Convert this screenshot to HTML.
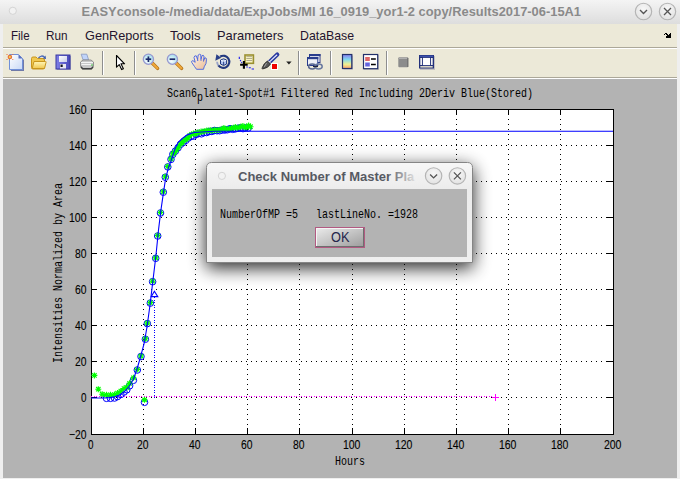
<!DOCTYPE html>
<html><head><meta charset="utf-8"><style>
html,body{margin:0;padding:0;width:680px;height:479px;overflow:hidden;background:#efefef}
svg{position:absolute;left:0;top:0;display:block}
text{white-space:pre}
.mono{font-family:"Liberation Mono",monospace;font-size:13.5px;fill:#000;stroke:none}
.sans{font-family:"Liberation Sans",sans-serif}
.num{font-family:"Liberation Sans",sans-serif;font-size:12.6px;fill:#000;stroke:#000;stroke-width:0.1px}
</style></head><body>
<svg width="680" height="479" viewBox="0 0 680 479" shape-rendering="crispEdges">
<defs>
<linearGradient id="tb" x1="0" y1="0" x2="0" y2="1"><stop offset="0" stop-color="#f4f4f4"/><stop offset="1" stop-color="#dddddd"/></linearGradient>
<linearGradient id="dfr" gradientUnits="userSpaceOnUse" x1="0" y1="163" x2="0" y2="262"><stop offset="0" stop-color="#f7f7f7"/><stop offset="0.26" stop-color="#ececec"/><stop offset="1" stop-color="#efefef"/></linearGradient>
<radialGradient id="btn" cx="0.5" cy="0.35" r="0.6"><stop offset="0" stop-color="#f7f7f7"/><stop offset="1" stop-color="#e4e4e4"/></radialGradient>
<linearGradient id="okg" x1="0" y1="0" x2="1" y2="1"><stop offset="0" stop-color="#ebebeb"/><stop offset="0.5" stop-color="#c4c4c4"/><stop offset="1" stop-color="#9c9c9c"/></linearGradient>
<filter id="shadow" x="-30%" y="-60%" width="160%" height="220%"><feGaussianBlur in="SourceAlpha" stdDeviation="9"/><feOffset dx="0" dy="5"/><feComponentTransfer><feFuncA type="linear" slope="0.85"/></feComponentTransfer><feMerge><feMergeNode/><feMergeNode in="SourceGraphic"/></feMerge></filter>
</defs>

<rect x="0" y="0" width="680" height="24" fill="url(#tb)"/>
<circle cx="12.8" cy="10.8" r="3.6" fill="#f2f2f2" stroke="#d4d4d4" stroke-width="1" shape-rendering="auto"/>
<text x="81.6" y="16" class="sans" font-weight="bold" font-size="13" fill="#8a8a8a" textLength="499.4" lengthAdjust="spacingAndGlyphs" shape-rendering="auto">EASYconsole-/media/data/ExpJobs/MI 16_0919_yor1-2 copy/Results2017-06-15A1</text>
<circle cx="643.5" cy="11.5" r="8.2" fill="url(#btn)" stroke="#b4b4b4" stroke-width="1.15" shape-rendering="auto"/>
<path d="M640.0 10 L643.5 13.5 L647.0 10" fill="none" stroke="#555" stroke-width="1.35" shape-rendering="auto"/>
<circle cx="667.5" cy="11.5" r="8.2" fill="url(#btn)" stroke="#b4b4b4" stroke-width="1.15" shape-rendering="auto"/>
<path d="M664.0 8 L671.0 15 M671.0 8 L664.0 15" fill="none" stroke="#555" stroke-width="1.3" shape-rendering="auto"/>
<rect x="3" y="24" width="674" height="55" fill="#ece9d8"/>
<text x="11" y="40" class="sans" font-size="13" fill="#24142e" textLength="18.6" lengthAdjust="spacingAndGlyphs" shape-rendering="auto">File</text>
<text x="46" y="40" class="sans" font-size="13" fill="#24142e" textLength="21.5" lengthAdjust="spacingAndGlyphs" shape-rendering="auto">Run</text>
<text x="85" y="40" class="sans" font-size="13" fill="#24142e" textLength="68.5" lengthAdjust="spacingAndGlyphs" shape-rendering="auto">GenReports</text>
<text x="170" y="40" class="sans" font-size="13" fill="#24142e" textLength="30.5" lengthAdjust="spacingAndGlyphs" shape-rendering="auto">Tools</text>
<text x="217" y="40" class="sans" font-size="13" fill="#24142e" textLength="66.5" lengthAdjust="spacingAndGlyphs" shape-rendering="auto">Parameters</text>
<text x="300" y="40" class="sans" font-size="13" fill="#24142e" textLength="54" lengthAdjust="spacingAndGlyphs" shape-rendering="auto">DataBase</text>
<rect x="3" y="47" width="674" height="1" fill="#aca899"/><rect x="3" y="48" width="674" height="1" fill="#ffffff"/>
<rect x="3" y="77" width="674" height="1" fill="#aca899"/><rect x="3" y="78" width="674" height="1" fill="#ffffff"/>
<rect x="102" y="51" width="1" height="24" fill="#8e8e8e"/><rect x="103" y="51" width="1" height="24" fill="#ffffff"/>
<rect x="134" y="51" width="1" height="24" fill="#8e8e8e"/><rect x="135" y="51" width="1" height="24" fill="#ffffff"/>
<rect x="298" y="51" width="1" height="24" fill="#8e8e8e"/><rect x="299" y="51" width="1" height="24" fill="#ffffff"/>
<rect x="330" y="51" width="1" height="24" fill="#8e8e8e"/><rect x="331" y="51" width="1" height="24" fill="#ffffff"/>
<rect x="386" y="51" width="1" height="24" fill="#8e8e8e"/><rect x="387" y="51" width="1" height="24" fill="#ffffff"/>
<defs>
<linearGradient id="pageg" x1="0" y1="0" x2="1" y2="1"><stop offset="0" stop-color="#ffffff"/><stop offset="1" stop-color="#c9d9f6"/></linearGradient>
<linearGradient id="foldg" x1="0" y1="0" x2="0" y2="1"><stop offset="0" stop-color="#fff6b8"/><stop offset="1" stop-color="#f0c850"/></linearGradient>
<linearGradient id="floppyg" x1="0" y1="0" x2="1" y2="0"><stop offset="0" stop-color="#8080e8"/><stop offset="1" stop-color="#4848b8"/></linearGradient>
<linearGradient id="labelg" x1="0" y1="0" x2="1" y2="1"><stop offset="0" stop-color="#ffffff"/><stop offset="1" stop-color="#c8cce8"/></linearGradient>
<linearGradient id="printg" x1="0" y1="0" x2="0" y2="1"><stop offset="0" stop-color="#f0f0f0"/><stop offset="0.5" stop-color="#c0c0c0"/><stop offset="1" stop-color="#606060"/></linearGradient>
<radialGradient id="lensg" cx="0.4" cy="0.65" r="0.6"><stop offset="0" stop-color="#ffffff"/><stop offset="1" stop-color="#a8e0ee"/></radialGradient>
<linearGradient id="sking" x1="0" y1="0" x2="1" y2="1"><stop offset="0" stop-color="#fff6ee"/><stop offset="1" stop-color="#ebbc94"/></linearGradient>
<linearGradient id="cbarg" x1="0" y1="0" x2="0" y2="1"><stop offset="0" stop-color="#8a7cf0"/><stop offset="0.35" stop-color="#80d8f0"/><stop offset="0.7" stop-color="#f0f090"/><stop offset="1" stop-color="#f8a070"/></linearGradient>
</defs>
<g shape-rendering="auto">
<path d="M11 56 H20 L24 60 V71 H11 Z" fill="#5a66a0" opacity="0.85"/>
<path d="M9.5 54.5 H18.5 L22.5 58.5 V69.5 H9.5 Z" fill="url(#pageg)" stroke="#7090d8" stroke-width="1"/>
<path d="M18.5 54.5 V58.5 H22.5 Z" fill="#5a70c0"/>
<circle cx="9.9" cy="57" r="2.3" fill="#e8703a"/><circle cx="9.9" cy="57" r="1" fill="#f4e050"/>
<path d="M6.5 54 L7.5 55 M13.3 54 L12.3 55 M6.5 60 L7.5 59 M13.3 60 L12.3 59" stroke="#e8703a" stroke-width="1"/>
<path d="M31.5 58.5 Q31.5 57 33 57 H36 L37.5 58.5 H43 Q44.5 58.5 44.5 60 V67.5 Q44.5 69 43 69 H33 Q31.5 69 31.5 67.5 Z" fill="#f0c850" stroke="#c8961e" stroke-width="1"/>
<path d="M34 61.5 H45.5 Q46.5 61.5 46 62.5 L44.5 68.5 H32.2 Z" fill="url(#foldg)" stroke="#c8961e" stroke-width="1"/>
<path d="M38.5 58 Q41.5 54.5 44.5 57.2" fill="none" stroke="#4a6ab8" stroke-width="1.3"/><path d="M43 58.5 L46 59 L45.5 55.5 Z" fill="#3a5aa8"/>
<rect x="57" y="56" width="14" height="14" fill="#9090b0" opacity="0.7"/>
<rect x="56" y="55" width="14" height="14" fill="url(#floppyg)" stroke="#3838a0" stroke-width="1"/>
<rect x="59" y="56" width="8" height="6" fill="url(#labelg)"/>
<rect x="60" y="64" width="6" height="4.5" fill="#e8e8f0"/><rect x="60.5" y="64.5" width="2.2" height="2.5" fill="#101020"/>
<path d="M81.2 54.2 H86.8 L88.6 59.8 H83 Z" fill="#c0d4fa" stroke="#8898c0" stroke-width="0.8"/>
<path d="M80.5 62 L83 60 H91 L93.5 62 V66.5 L91.5 69 H82.5 L80.5 66.5 Z" fill="#c8c8c8" stroke="#808080" stroke-width="0.8"/>
<path d="M81 62.5 H93 M81.5 64.5 H92.5" stroke="#f4f4f4" stroke-width="1"/>
<path d="M81 66.8 L82.6 68.8 H91.4 L93 66.8" fill="none" stroke="#404040" stroke-width="1.4"/>
<path d="M92 64 V66" stroke="#40c040" stroke-width="1"/>
<path d="M116.5 55.5 V67.2 L119.2 64.6 L121.6 69.6 L123.4 68.8 L121 63.8 H124.6 Z" fill="#ffffff" stroke="#000" stroke-width="1.1" stroke-linejoin="round"/>
<path d="M152.4 63.2 L157.6 68.4" stroke="#b07018" stroke-width="3.4" stroke-linecap="round"/>
<path d="M152.4 63.2 L157.4 68.2" stroke="#f0a838" stroke-width="2.2" stroke-linecap="round"/>
<circle cx="148.4" cy="59.2" r="5.1" fill="url(#lensg)" stroke="#9898d0" stroke-width="1.3"/>
<path d="M145.6 59.2 H151.20000000000002" stroke="#1a2a6a" stroke-width="1.7"/>
<path d="M148.4 56.400000000000006 V62.0" stroke="#1a2a6a" stroke-width="1.7"/>
<path d="M176.4 63.2 L181.6 68.4" stroke="#b07018" stroke-width="3.4" stroke-linecap="round"/>
<path d="M176.4 63.2 L181.4 68.2" stroke="#f0a838" stroke-width="2.2" stroke-linecap="round"/>
<circle cx="172.4" cy="59.2" r="5.1" fill="url(#lensg)" stroke="#9898d0" stroke-width="1.3"/>
<path d="M169.6 59.2 H175.20000000000002" stroke="#1a2a6a" stroke-width="1.7"/>
<path d="M196.5 69.3 L194.5 66.5 L191.8 62.5 Q191 61 192.8 60.6 L195.2 62.3 L194 57.5 Q194.5 55.3 196.2 55.8 L197.6 59.5 L198.2 55 Q199.5 53.7 200.7 54.6 L201 59.3 L202 55.6 Q203.3 54.8 204 56 L203.8 60 L204.8 57.8 Q206.3 57.5 206.5 59.2 L206 63.5 L204.2 66.8 L203.5 69.3 Z" fill="url(#sking)" stroke="#3a5ae0" stroke-width="0.85"/>
<path d="M197.6 59.5 L197.8 61 M201 59.3 V60.8 M203.8 60 L203.5 61.5" stroke="#3050d8" stroke-width="0.9"/>
<path d="M220.2 56.5 A6.1 6.1 0 1 1 218.3 65.4" fill="none" stroke="#22387e" stroke-width="2.1"/>
<path d="M218.3 65.4 A6.1 6.1 0 0 1 217.1 61.8" fill="none" stroke="#9aa4c8" stroke-width="1.8"/>
<path d="M216.4 54.2 L221.3 57.8 L215.3 60.8 Z" fill="#2a4088"/>
<path d="M220.5 60 L223.6 58.8 L226.6 60 V64 L223.6 65.5 L220.5 64 Z" fill="#b0c4f0" stroke="#22387e" stroke-width="1"/><path d="M221 60.4 L223.6 61.4 L226.2 60.4" stroke="#ffffff" stroke-width="0.9" fill="none"/><path d="M223.6 61.6 V65" stroke="#22387e" stroke-width="0.9"/>
<rect x="245" y="55" width="8.4" height="8.3" fill="#f8f4c4" stroke="#9a9030" stroke-width="1.6"/>
<path d="M246.3 56.6 H252.2 M246.3 58.5 H252.2 M246.3 60.5 H252.2" stroke="#a8a488" stroke-width="0.9"/>
<path d="M239.3 56.8 V59 M240.2 60 L240.8 61.2 M241.4 62.2 L242 63" stroke="#1818f0" stroke-width="1.1" fill="none"/>
<path d="M246.3 67 H247.8 M248.8 67.8 H250.8 M251.6 69 H254" stroke="#1818f0" stroke-width="1.1" fill="none"/>
<path d="M240.1 64.8 H247.7 M243.9 61.1 V68.7" stroke="#000" stroke-width="2.1"/>
<path d="M269 62.6 L277.3 54.6" stroke="#2a3aa0" stroke-width="4.2" stroke-linecap="round"/><path d="M269.5 61.8 L276.8 55" stroke="#e8ecff" stroke-width="1.1" stroke-linecap="round"/>
<path d="M268 60.8 L270.8 63.6" stroke="#ffffff" stroke-width="1.2"/>
<path d="M267.5 61 L270.5 64 Q268.5 68 262.5 69 Q261.8 68.6 262.3 67.6 Q264 63 267.5 61 Z" fill="#585858" stroke="#282828" stroke-width="0.9"/><path d="M266.5 63.2 L264.3 66.8" stroke="#b0b0b0" stroke-width="0.9"/>
<rect x="271" y="63" width="7" height="7" fill="#ffffff"/><rect x="272" y="64" width="5" height="5" fill="#ee0000"/>
<path d="M286.2 61.5 H291.6 L288.9 64.4 Z" fill="#202020"/>
<rect x="309.5" y="54.5" width="10.5" height="8" fill="#ffffff" stroke="#283c8c" stroke-width="1"/><rect x="309" y="54" width="11.5" height="2.2" fill="#283c8c"/><rect x="320" y="56" width="1" height="7" fill="#9090a8" opacity="0.6"/>
<rect x="307.5" y="57.5" width="10.3" height="8" fill="#eef0f6" stroke="#283c8c" stroke-width="1"/><rect x="307" y="57" width="11.3" height="2.2" fill="#283c8c"/>
<ellipse cx="312.2" cy="66.5" rx="3.6" ry="2.4" fill="none" stroke="#5a6890" stroke-width="1.5"/><ellipse cx="318.6" cy="66.5" rx="3.6" ry="2.4" fill="none" stroke="#6a7aa0" stroke-width="1.5"/><path d="M313 66.5 H318" stroke="#20243a" stroke-width="1.2"/>
<rect x="343.5" y="55.5" width="9.5" height="14" fill="#9090a8" opacity="0.6"/>
<rect x="342.5" y="54.5" width="9.3" height="14" fill="url(#cbarg)" stroke="#22306a" stroke-width="1.2"/>
<rect x="364" y="55" width="15" height="15" fill="#a0a0b0" opacity="0.5"/>
<rect x="363.5" y="54.5" width="14.2" height="14.2" fill="#ffffff" stroke="#22306a" stroke-width="1.2"/>
<rect x="365.2" y="57" width="4.6" height="4" fill="#e06868"/><rect x="365.2" y="62.5" width="4.6" height="4" fill="#6464e0"/>
<path d="M371 59 H375.8 M371 64.5 H375.8" stroke="#000" stroke-width="1.4"/>
<rect x="398.3" y="57.3" width="10" height="10" rx="1" fill="#8c8c8c"/><path d="M399 58.3 H407.5" stroke="#b8b8b8" stroke-width="1"/><path d="M407.8 58 V67" stroke="#6c6c6c" stroke-width="1"/>
<rect x="420" y="56" width="15" height="14" fill="#9898a8" opacity="0.5"/>
<rect x="419" y="55" width="15" height="13.5" fill="#22307a"/><rect x="419.8" y="55.7" width="13.4" height="1" fill="#4a60c0"/>
<rect x="420.3" y="58" width="1.7" height="7" fill="#f0f0f0"/><rect x="431" y="58" width="1.7" height="7" fill="#f0f0f0"/><rect x="420.3" y="66" width="12.4" height="1.6" fill="#d8d4c4"/>
<rect x="422.9" y="57.9" width="7.2" height="7.2" fill="#ffffff"/>
<path d="M664 34h1v1h-1z M665 33h2v1h-2z M670 33h1v1h-1z M666 34h2v1h-2z M669 34h2v1h-2z M667 35h4v1h-4z M666 36h5v2h-5z" fill="#000" shape-rendering="crispEdges"/>
</g>
<rect x="3" y="79" width="674" height="399" fill="#b3b3b3"/>
<rect x="91" y="109" width="523" height="326" fill="#ffffff"/>
<path d="M143.5 109 V434 M195.5 109 V434 M247.5 109 V434 M299.5 109 V434 M352.5 109 V434 M404.5 109 V434 M456.5 109 V434 M508.5 109 V434 M560.5 109 V434 M91 397.5 H613 M91 361.5 H613 M91 325.5 H613 M91 289.5 H613 M91 253.5 H613 M91 217.5 H613 M91 181.5 H613 M91 145.5 H613" stroke="#000" stroke-width="1" stroke-dasharray="1 4" fill="none"/>
<path d="M143.5 434 V428 M143.5 109 V115 M195.5 434 V428 M195.5 109 V115 M247.5 434 V428 M247.5 109 V115 M299.5 434 V428 M299.5 109 V115 M352.5 434 V428 M352.5 109 V115 M404.5 434 V428 M404.5 109 V115 M456.5 434 V428 M456.5 109 V115 M508.5 434 V428 M508.5 109 V115 M560.5 434 V428 M560.5 109 V115 M91 397.5 H97 M613 397.5 H607 M91 361.5 H97 M613 361.5 H607 M91 325.5 H97 M613 325.5 H607 M91 289.5 H97 M613 289.5 H607 M91 253.5 H97 M613 253.5 H607 M91 217.5 H97 M613 217.5 H607 M91 181.5 H97 M613 181.5 H607 M91 145.5 H97 M613 145.5 H607" stroke="#000" stroke-width="1" fill="none"/>
<rect x="91.5" y="109.5" width="522" height="325" fill="none" stroke="#000" stroke-width="1"/>
<text x="69.0" y="439" class="num" textLength="17.5" lengthAdjust="spacingAndGlyphs" shape-rendering="auto">−20</text>
<text x="81.0" y="402" class="num" textLength="5.5" lengthAdjust="spacingAndGlyphs" shape-rendering="auto">0</text>
<text x="75.0" y="366" class="num" textLength="11.5" lengthAdjust="spacingAndGlyphs" shape-rendering="auto">20</text>
<text x="75.0" y="330" class="num" textLength="11.5" lengthAdjust="spacingAndGlyphs" shape-rendering="auto">40</text>
<text x="75.0" y="294" class="num" textLength="11.5" lengthAdjust="spacingAndGlyphs" shape-rendering="auto">60</text>
<text x="75.0" y="258" class="num" textLength="11.5" lengthAdjust="spacingAndGlyphs" shape-rendering="auto">80</text>
<text x="69.0" y="222" class="num" textLength="17.5" lengthAdjust="spacingAndGlyphs" shape-rendering="auto">100</text>
<text x="69.0" y="186" class="num" textLength="17.5" lengthAdjust="spacingAndGlyphs" shape-rendering="auto">120</text>
<text x="69.0" y="150" class="num" textLength="17.5" lengthAdjust="spacingAndGlyphs" shape-rendering="auto">140</text>
<text x="69.0" y="114" class="num" textLength="17.5" lengthAdjust="spacingAndGlyphs" shape-rendering="auto">160</text>
<text x="87.95" y="449" class="num" textLength="5.5" lengthAdjust="spacingAndGlyphs" shape-rendering="auto">0</text>
<text x="136.95" y="449" class="num" textLength="11.5" lengthAdjust="spacingAndGlyphs" shape-rendering="auto">20</text>
<text x="188.95" y="449" class="num" textLength="11.5" lengthAdjust="spacingAndGlyphs" shape-rendering="auto">40</text>
<text x="240.95" y="449" class="num" textLength="11.5" lengthAdjust="spacingAndGlyphs" shape-rendering="auto">60</text>
<text x="292.95" y="449" class="num" textLength="11.5" lengthAdjust="spacingAndGlyphs" shape-rendering="auto">80</text>
<text x="342.95" y="449" class="num" textLength="17.5" lengthAdjust="spacingAndGlyphs" shape-rendering="auto">100</text>
<text x="394.95" y="449" class="num" textLength="17.5" lengthAdjust="spacingAndGlyphs" shape-rendering="auto">120</text>
<text x="446.95" y="449" class="num" textLength="17.5" lengthAdjust="spacingAndGlyphs" shape-rendering="auto">140</text>
<text x="498.95" y="449" class="num" textLength="17.5" lengthAdjust="spacingAndGlyphs" shape-rendering="auto">160</text>
<text x="550.95" y="449" class="num" textLength="17.5" lengthAdjust="spacingAndGlyphs" shape-rendering="auto">180</text>
<text x="603.95" y="449" class="num" textLength="17.5" lengthAdjust="spacingAndGlyphs" shape-rendering="auto">200</text>
<text x="335" y="465" class="mono" textLength="30" lengthAdjust="spacingAndGlyphs" shape-rendering="auto" >Hours</text>
<g transform="translate(62,363) rotate(-90)"><text x="0" y="0" class="mono" textLength="180" lengthAdjust="spacingAndGlyphs" shape-rendering="auto" >Intensities Normalized by Area</text></g>
<text x="167" y="97" class="mono" textLength="30" lengthAdjust="spacingAndGlyphs" shape-rendering="auto">Scan6</text>
<text x="197" y="101" class="mono" textLength="6" lengthAdjust="spacingAndGlyphs" shape-rendering="auto">p</text>
<text x="203" y="97" class="mono" textLength="330" lengthAdjust="spacingAndGlyphs" shape-rendering="auto" >late1-Spot#1 Filtered Red Including 2Deriv Blue(Stored)</text>
<path d="M91 396.5 H493" stroke="#ff00ff" stroke-width="1" stroke-dasharray="1 1.5" fill="none"/>
<path d="M492 397.5 H499 M495.5 394 V401" stroke="#ff00ff" stroke-width="1" fill="none"/>
<path d="M154.5 297 V398" stroke="#0000ff" stroke-width="1" stroke-dasharray="1 1.5" fill="none"/>
<path d="M154.4 291.2 L157.8 296.6 L151.2 296.6 Z" fill="none" stroke="#0000ff" stroke-width="1.1" shape-rendering="auto"/>
<path d="M103.2 398.3 a3.3 3.3 0 1 0 6.6 0 a3.3 3.3 0 1 0 -6.6 0 M107.2 398.3 a3.3 3.3 0 1 0 6.6 0 a3.3 3.3 0 1 0 -6.6 0 M111.2 398.0 a3.3 3.3 0 1 0 6.6 0 a3.3 3.3 0 1 0 -6.6 0 M114.2 396.6 a3.3 3.3 0 1 0 6.6 0 a3.3 3.3 0 1 0 -6.6 0 M117.5 394.5 a3.3 3.3 0 1 0 6.6 0 a3.3 3.3 0 1 0 -6.6 0 M120.7 392.0 a3.3 3.3 0 1 0 6.6 0 a3.3 3.3 0 1 0 -6.6 0 M123.5 389.8 a3.3 3.3 0 1 0 6.6 0 a3.3 3.3 0 1 0 -6.6 0 M126.3 385.8 a3.3 3.3 0 1 0 6.6 0 a3.3 3.3 0 1 0 -6.6 0 M130.1 380.3 a3.3 3.3 0 1 0 6.6 0 a3.3 3.3 0 1 0 -6.6 0 M134.0 370.0 a3.3 3.3 0 1 0 6.6 0 a3.3 3.3 0 1 0 -6.6 0 M137.7 356.5 a3.3 3.3 0 1 0 6.6 0 a3.3 3.3 0 1 0 -6.6 0 M142.1 339.2 a3.3 3.3 0 1 0 6.6 0 a3.3 3.3 0 1 0 -6.6 0 M144.0 323.6 a3.3 3.3 0 1 0 6.6 0 a3.3 3.3 0 1 0 -6.6 0 M147.0 303.1 a3.3 3.3 0 1 0 6.6 0 a3.3 3.3 0 1 0 -6.6 0 M149.3 281.7 a3.3 3.3 0 1 0 6.6 0 a3.3 3.3 0 1 0 -6.6 0 M152.4 258.3 a3.3 3.3 0 1 0 6.6 0 a3.3 3.3 0 1 0 -6.6 0 M154.4 236.0 a3.3 3.3 0 1 0 6.6 0 a3.3 3.3 0 1 0 -6.6 0 M157.2 213.0 a3.3 3.3 0 1 0 6.6 0 a3.3 3.3 0 1 0 -6.6 0 M160.0 192.2 a3.3 3.3 0 1 0 6.6 0 a3.3 3.3 0 1 0 -6.6 0 M162.0 177.2 a3.3 3.3 0 1 0 6.6 0 a3.3 3.3 0 1 0 -6.6 0 M164.5 166.9 a3.3 3.3 0 1 0 6.6 0 a3.3 3.3 0 1 0 -6.6 0 M167.7 159.4 a3.3 3.3 0 1 0 6.6 0 a3.3 3.3 0 1 0 -6.6 0 M169.5 154.4 a3.3 3.3 0 1 0 6.6 0 a3.3 3.3 0 1 0 -6.6 0 M172.1 151.1 a3.3 3.3 0 1 0 6.6 0 a3.3 3.3 0 1 0 -6.6 0 M174.7 147.8 a3.3 3.3 0 1 0 6.6 0 a3.3 3.3 0 1 0 -6.6 0 M177.3 144.3 a3.3 3.3 0 1 0 6.6 0 a3.3 3.3 0 1 0 -6.6 0 M179.9 142.5 a3.3 3.3 0 1 0 6.6 0 a3.3 3.3 0 1 0 -6.6 0 M182.5 140.3 a3.3 3.3 0 1 0 6.6 0 a3.3 3.3 0 1 0 -6.6 0 M185.1 138.0 a3.3 3.3 0 1 0 6.6 0 a3.3 3.3 0 1 0 -6.6 0 M187.7 136.4 a3.3 3.3 0 1 0 6.6 0 a3.3 3.3 0 1 0 -6.6 0 M190.3 136.1 a3.3 3.3 0 1 0 6.6 0 a3.3 3.3 0 1 0 -6.6 0 M192.9 134.4 a3.3 3.3 0 1 0 6.6 0 a3.3 3.3 0 1 0 -6.6 0 M195.5 133.5 a3.3 3.3 0 1 0 6.6 0 a3.3 3.3 0 1 0 -6.6 0 M198.1 133.8 a3.3 3.3 0 1 0 6.6 0 a3.3 3.3 0 1 0 -6.6 0 M200.7 132.6 a3.3 3.3 0 1 0 6.6 0 a3.3 3.3 0 1 0 -6.6 0 M203.3 132.5 a3.3 3.3 0 1 0 6.6 0 a3.3 3.3 0 1 0 -6.6 0 M205.9 131.5 a3.3 3.3 0 1 0 6.6 0 a3.3 3.3 0 1 0 -6.6 0 M208.5 131.4 a3.3 3.3 0 1 0 6.6 0 a3.3 3.3 0 1 0 -6.6 0 M211.1 130.5 a3.3 3.3 0 1 0 6.6 0 a3.3 3.3 0 1 0 -6.6 0 M213.7 130.7 a3.3 3.3 0 1 0 6.6 0 a3.3 3.3 0 1 0 -6.6 0 M216.3 130.7 a3.3 3.3 0 1 0 6.6 0 a3.3 3.3 0 1 0 -6.6 0 M218.9 130.0 a3.3 3.3 0 1 0 6.6 0 a3.3 3.3 0 1 0 -6.6 0 M221.5 130.0 a3.3 3.3 0 1 0 6.6 0 a3.3 3.3 0 1 0 -6.6 0 M224.1 129.7 a3.3 3.3 0 1 0 6.6 0 a3.3 3.3 0 1 0 -6.6 0 M226.7 128.7 a3.3 3.3 0 1 0 6.6 0 a3.3 3.3 0 1 0 -6.6 0 M229.3 129.3 a3.3 3.3 0 1 0 6.6 0 a3.3 3.3 0 1 0 -6.6 0 M231.9 128.9 a3.3 3.3 0 1 0 6.6 0 a3.3 3.3 0 1 0 -6.6 0 M234.5 128.3 a3.3 3.3 0 1 0 6.6 0 a3.3 3.3 0 1 0 -6.6 0 M237.1 127.8 a3.3 3.3 0 1 0 6.6 0 a3.3 3.3 0 1 0 -6.6 0 M239.7 128.6 a3.3 3.3 0 1 0 6.6 0 a3.3 3.3 0 1 0 -6.6 0 M242.3 127.9 a3.3 3.3 0 1 0 6.6 0 a3.3 3.3 0 1 0 -6.6 0 M244.9 128.0 a3.3 3.3 0 1 0 6.6 0 a3.3 3.3 0 1 0 -6.6 0 M141.2 402.3 a3.3 3.3 0 1 0 6.6 0 a3.3 3.3 0 1 0 -6.6 0" fill="none" stroke="#0000ff" stroke-width="1" shape-rendering="auto"/>
<path d="M171.5 152.3 h6 M174.5 149.3 v6 M172.3 150.1 l4.4 4.4 M176.7 150.1 l-4.4 4.4 M173.4 149.6 h6 M176.4 146.6 v6 M174.2 147.4 l4.4 4.4 M178.6 147.4 l-4.4 4.4 M175.3 147.5 h6 M178.3 144.5 v6 M176.1 145.3 l4.4 4.4 M180.5 145.3 l-4.4 4.4 M177.2 144.1 h6 M180.2 141.1 v6 M178.0 141.9 l4.4 4.4 M182.4 141.9 l-4.4 4.4 M179.1 142.9 h6 M182.1 139.9 v6 M179.9 140.7 l4.4 4.4 M184.3 140.7 l-4.4 4.4 M181.0 140.4 h6 M184.0 137.4 v6 M181.8 138.2 l4.4 4.4 M186.2 138.2 l-4.4 4.4 M182.9 139.4 h6 M185.9 136.4 v6 M183.7 137.2 l4.4 4.4 M188.1 137.2 l-4.4 4.4 M184.8 138.1 h6 M187.8 135.1 v6 M185.6 135.9 l4.4 4.4 M190.0 135.9 l-4.4 4.4 M186.7 135.5 h6 M189.7 132.5 v6 M187.5 133.3 l4.4 4.4 M191.9 133.3 l-4.4 4.4 M188.6 134.4 h6 M191.6 131.4 v6 M189.4 132.2 l4.4 4.4 M193.8 132.2 l-4.4 4.4 M190.5 133.5 h6 M193.5 130.5 v6 M191.3 131.3 l4.4 4.4 M195.7 131.3 l-4.4 4.4 M192.4 134.0 h6 M195.4 131.0 v6 M193.2 131.8 l4.4 4.4 M197.6 131.8 l-4.4 4.4 M194.3 132.6 h6 M197.3 129.6 v6 M195.1 130.4 l4.4 4.4 M199.5 130.4 l-4.4 4.4 M196.2 132.6 h6 M199.2 129.6 v6 M197.0 130.4 l4.4 4.4 M201.4 130.4 l-4.4 4.4 M198.1 131.6 h6 M201.1 128.6 v6 M198.9 129.4 l4.4 4.4 M203.3 129.4 l-4.4 4.4 M200.0 131.6 h6 M203.0 128.6 v6 M200.8 129.4 l4.4 4.4 M205.2 129.4 l-4.4 4.4 M201.9 131.0 h6 M204.9 128.0 v6 M202.7 128.8 l4.4 4.4 M207.1 128.8 l-4.4 4.4 M203.8 130.6 h6 M206.8 127.6 v6 M204.6 128.4 l4.4 4.4 M209.0 128.4 l-4.4 4.4 M205.7 130.6 h6 M208.7 127.6 v6 M206.5 128.4 l4.4 4.4 M210.9 128.4 l-4.4 4.4 M207.6 130.3 h6 M210.6 127.3 v6 M208.4 128.1 l4.4 4.4 M212.8 128.1 l-4.4 4.4 M209.5 130.6 h6 M212.5 127.6 v6 M210.3 128.4 l4.4 4.4 M214.7 128.4 l-4.4 4.4 M211.4 130.0 h6 M214.4 127.0 v6 M212.2 127.8 l4.4 4.4 M216.6 127.8 l-4.4 4.4 M213.3 130.2 h6 M216.3 127.2 v6 M214.1 128.0 l4.4 4.4 M218.5 128.0 l-4.4 4.4 M215.2 129.9 h6 M218.2 126.9 v6 M216.0 127.7 l4.4 4.4 M220.4 127.7 l-4.4 4.4 M217.1 129.9 h6 M220.1 126.9 v6 M217.9 127.7 l4.4 4.4 M222.3 127.7 l-4.4 4.4 M219.0 129.1 h6 M222.0 126.1 v6 M219.8 126.9 l4.4 4.4 M224.2 126.9 l-4.4 4.4 M220.9 128.0 h6 M223.9 125.0 v6 M221.7 125.8 l4.4 4.4 M226.1 125.8 l-4.4 4.4 M222.8 129.1 h6 M225.8 126.1 v6 M223.6 126.9 l4.4 4.4 M228.0 126.9 l-4.4 4.4 M224.7 129.1 h6 M227.7 126.1 v6 M225.5 126.9 l4.4 4.4 M229.9 126.9 l-4.4 4.4 M226.6 128.8 h6 M229.6 125.8 v6 M227.4 126.6 l4.4 4.4 M231.8 126.6 l-4.4 4.4 M228.5 128.0 h6 M231.5 125.0 v6 M229.3 125.8 l4.4 4.4 M233.7 125.8 l-4.4 4.4 M230.4 128.0 h6 M233.4 125.0 v6 M231.2 125.8 l4.4 4.4 M235.6 125.8 l-4.4 4.4 M232.3 127.0 h6 M235.3 124.0 v6 M233.1 124.8 l4.4 4.4 M237.5 124.8 l-4.4 4.4 M234.2 127.9 h6 M237.2 124.9 v6 M235.0 125.7 l4.4 4.4 M239.4 125.7 l-4.4 4.4 M236.1 127.3 h6 M239.1 124.3 v6 M236.9 125.1 l4.4 4.4 M241.3 125.1 l-4.4 4.4 M238.0 126.6 h6 M241.0 123.6 v6 M238.8 124.4 l4.4 4.4 M243.2 124.4 l-4.4 4.4 M239.9 126.0 h6 M242.9 123.0 v6 M240.7 123.8 l4.4 4.4 M245.1 123.8 l-4.4 4.4 M241.8 127.3 h6 M244.8 124.3 v6 M242.6 125.1 l4.4 4.4 M247.0 125.1 l-4.4 4.4 M243.7 127.3 h6 M246.7 124.3 v6 M244.5 125.1 l4.4 4.4 M248.9 125.1 l-4.4 4.4 M245.6 125.6 h6 M248.6 122.6 v6 M246.4 123.4 l4.4 4.4 M250.8 123.4 l-4.4 4.4 M247.5 126.7 h6 M250.5 123.7 v6 M248.3 124.5 l4.4 4.4 M252.7 124.5 l-4.4 4.4" fill="none" stroke="#00ff00" stroke-width="1.15" shape-rendering="auto"/>
<path d="M91.4 375.4 h6 M94.4 372.4 v6 M92.2 373.2 l4.4 4.4 M96.6 373.2 l-4.4 4.4 M95.3 389.2 h6 M98.3 386.2 v6 M96.1 387.0 l4.4 4.4 M100.5 387.0 l-4.4 4.4 M99.2 394.2 h6 M102.2 391.2 v6 M100.0 392.0 l4.4 4.4 M104.4 392.0 l-4.4 4.4 M103.5 394.8 h6 M106.5 391.8 v6 M104.3 392.6 l4.4 4.4 M108.7 392.6 l-4.4 4.4 M107.5 394.8 h6 M110.5 391.8 v6 M108.3 392.6 l4.4 4.4 M112.7 392.6 l-4.4 4.4 M111.5 394.5 h6 M114.5 391.5 v6 M112.3 392.3 l4.4 4.4 M116.7 392.3 l-4.4 4.4 M114.5 393.1 h6 M117.5 390.1 v6 M115.3 390.9 l4.4 4.4 M119.7 390.9 l-4.4 4.4 M117.8 391.0 h6 M120.8 388.0 v6 M118.6 388.8 l4.4 4.4 M123.0 388.8 l-4.4 4.4 M121.0 388.5 h6 M124.0 385.5 v6 M121.8 386.3 l4.4 4.4 M126.2 386.3 l-4.4 4.4 M123.8 387.3 h6 M126.8 384.3 v6 M124.6 385.1 l4.4 4.4 M129.0 385.1 l-4.4 4.4 M126.6 383.3 h6 M129.6 380.3 v6 M127.4 381.1 l4.4 4.4 M131.8 381.1 l-4.4 4.4 M130.4 377.8 h6 M133.4 374.8 v6 M131.2 375.6 l4.4 4.4 M135.6 375.6 l-4.4 4.4 M134.3 369.5 h6 M137.3 366.5 v6 M135.1 367.3 l4.4 4.4 M139.5 367.3 l-4.4 4.4 M138.0 356.0 h6 M141.0 353.0 v6 M138.8 353.8 l4.4 4.4 M143.2 353.8 l-4.4 4.4 M142.4 338.7 h6 M145.4 335.7 v6 M143.2 336.5 l4.4 4.4 M147.6 336.5 l-4.4 4.4 M144.3 323.1 h6 M147.3 320.1 v6 M145.1 320.9 l4.4 4.4 M149.5 320.9 l-4.4 4.4 M147.3 302.6 h6 M150.3 299.6 v6 M148.1 300.4 l4.4 4.4 M152.5 300.4 l-4.4 4.4 M149.6 281.2 h6 M152.6 278.2 v6 M150.4 279.0 l4.4 4.4 M154.8 279.0 l-4.4 4.4 M152.7 257.8 h6 M155.7 254.8 v6 M153.5 255.6 l4.4 4.4 M157.9 255.6 l-4.4 4.4 M154.7 235.5 h6 M157.7 232.5 v6 M155.5 233.3 l4.4 4.4 M159.9 233.3 l-4.4 4.4 M157.5 212.5 h6 M160.5 209.5 v6 M158.3 210.3 l4.4 4.4 M162.7 210.3 l-4.4 4.4 M160.3 191.7 h6 M163.3 188.7 v6 M161.1 189.5 l4.4 4.4 M165.5 189.5 l-4.4 4.4 M162.3 176.7 h6 M165.3 173.7 v6 M163.1 174.5 l4.4 4.4 M167.5 174.5 l-4.4 4.4 M164.8 166.4 h6 M167.8 163.4 v6 M165.6 164.2 l4.4 4.4 M170.0 164.2 l-4.4 4.4 M168.0 158.9 h6 M171.0 155.9 v6 M168.8 156.7 l4.4 4.4 M173.2 156.7 l-4.4 4.4 M169.8 153.9 h6 M172.8 150.9 v6 M170.6 151.7 l4.4 4.4 M175.0 151.7 l-4.4 4.4 M141.5 399.8 h6 M144.5 396.8 v6 M142.3 397.6 l4.4 4.4 M146.7 397.6 l-4.4 4.4" fill="none" stroke="#00ff00" stroke-width="1.15" shape-rendering="auto"/>
<path d="M91 398 L104 398 L110 397.6 L115 396.8 L119.5 395 L124.5 391.5 L129.5 386 L133.5 379 L137 369 L140.5 357 L144 344 L147 327 L150 305 L153 280 L156 255 L158.5 230 L160.8 211 L163.5 192.3 L165.6 178.5 L168.5 167.5 L171.3 160.2 L173 155 L174.8 149.5 L176.5 145.5 L178.5 142 L182 138.6 L186.5 135.3 L191 133.4 L195 132.5 L205 131.7 L215 131.3 L613 131.3" fill="none" stroke="#0000ff" stroke-width="1.1" shape-rendering="auto"/>
<g filter="url(#shadow)">
<path d="M206.5 262.5 V167.5 Q206.5 162.5 211.5 162.5 H467.5 Q472.5 162.5 472.5 167.5 V262.5 Z" fill="url(#dfr)" stroke="#858585" stroke-width="1" shape-rendering="auto"/>
</g>
<circle cx="221.9" cy="175.9" r="3.6" fill="#f2f2f2" stroke="#d4d4d4" stroke-width="1" shape-rendering="auto"/>
<linearGradient id="fade" gradientUnits="userSpaceOnUse" x1="388" y1="0" x2="416" y2="0"><stop offset="0" stop-color="#565962" stop-opacity="1"/><stop offset="1" stop-color="#565962" stop-opacity="0.08"/></linearGradient><text x="238" y="181" class="sans" font-weight="bold" font-size="13" fill="url(#fade)" shape-rendering="auto">Check Number of Master Pla</text>
<circle cx="433.6" cy="175.9" r="8.2" fill="url(#btn)" stroke="#b4b4b4" stroke-width="1.15" shape-rendering="auto"/>
<path d="M430.1 174.4 L433.6 177.9 L437.1 174.4" fill="none" stroke="#555" stroke-width="1.35" shape-rendering="auto"/>
<circle cx="457.4" cy="175.9" r="8.2" fill="url(#btn)" stroke="#b4b4b4" stroke-width="1.15" shape-rendering="auto"/>
<path d="M453.9 172.4 L460.9 179.4 M460.9 172.4 L453.9 179.4" fill="none" stroke="#555" stroke-width="1.3" shape-rendering="auto"/>
<rect x="212" y="189" width="255" height="68" fill="#b3b3b3"/>
<text x="220" y="218" class="mono" textLength="198" lengthAdjust="spacingAndGlyphs" shape-rendering="auto" >NumberOfMP =5   lastLineNo. =1928</text>
<rect x="315" y="227" width="50" height="21" fill="#b25a82"/>
<rect x="316" y="228" width="48" height="19" fill="url(#okg)"/>
<path d="M316 228.5 H364 M316.5 228 V247" stroke="#f4f4f4" stroke-width="1"/>
<path d="M316 246.5 H364 M363.5 228 V247" stroke="#6e6e6e" stroke-width="1"/>
<text x="331" y="242" class="sans" font-size="14" fill="#26264c" textLength="18.5" lengthAdjust="spacingAndGlyphs" shape-rendering="auto">OK</text>
</svg></body></html>
